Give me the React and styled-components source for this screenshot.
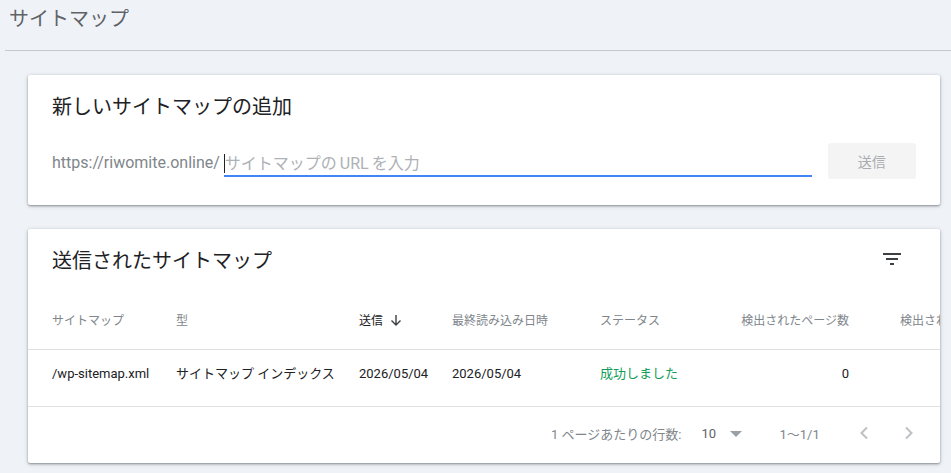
import React from 'react';
import styled, { createGlobalStyle } from 'styled-components';

const GlobalStyle = createGlobalStyle`
  html, body {
    margin: 0;
    padding: 0;
    height: 100%;
    background: #eff3f8;
    overflow: hidden;
  }
  body {
    font-family: Roboto, "Noto Sans CJK JP", sans-serif;
  }
`;

const Page = styled.div`
  width: 951px;
  height: 473px;
  overflow: hidden;
  background: #eff3f8;
`;

const TopBar = styled.header`
  height: 51px;
  margin-left: 5px;
  padding: 6px 0 0 4px;
  box-sizing: border-box;
  border-bottom: 1px solid #c6c9c9;
`;

const PageTitle = styled.h1`
  margin: 0;
  font-size: 20px;
  line-height: 26px;
  font-weight: 400;
  color: #5f6368;
`;

const Content = styled.main`
  display: flex;
  flex-direction: column;
  gap: 24px;
  width: 912px;
  margin: 24px 0 0 28px;
`;

const Card = styled.section`
  background: #fff;
  border-radius: 2px;
  box-shadow: 0 1px 2px rgba(60, 64, 67, 0.45), 0 1px 4px rgba(60, 64, 67, 0.25);
  overflow: hidden;
`;

const AddCard = styled(Card)`
  height: 130px;
  padding: 19px 24px 0;
  box-sizing: border-box;
`;

const CardTitle = styled.h2`
  margin: 0;
  font-size: 20px;
  line-height: 26px;
  font-weight: 400;
  color: #202124;
`;

const AddRow = styled.div`
  display: flex;
  align-items: flex-start;
  margin-top: 24px;
`;

const Prefix = styled.span`
  font-size: 16px;
  line-height: 38px;
  color: #80868b;
  margin-right: 4px;
  white-space: nowrap;
`;

const UrlField = styled.div`
  display: flex;
  align-items: flex-end;
  width: 588px;
  height: 33px;
  box-sizing: border-box;
  border-bottom: 2px solid #4285f4;
`;

const Caret = styled.span`
  width: 1px;
  height: 19px;
  margin-bottom: 2px;
  background: #202124;
`;

const Placeholder = styled.span`
  font-size: 16px;
  line-height: 22px;
  word-spacing: -1px;
  color: #aeb1b5;
  white-space: nowrap;
`;

const SendButton = styled.button`
  width: 88px;
  height: 36px;
  margin-left: 16px;
  margin-top: -1px;
  border: 0;
  border-radius: 3px;
  background: #f4f4f4;
  color: #aaadb0;
  font: inherit;
  font-size: 14px;
`;

const ListCard = styled(Card)`
  height: 234px;
  display: flex;
  flex-direction: column;
`;

const ListHeader = styled.div`
  display: flex;
  align-items: center;
  justify-content: space-between;
  height: 63px;
  padding: 1px 39px 0 24px;
  box-sizing: border-box;
`;

const FilterIcon = styled.svg`
  display: block;
  width: 18px;
  height: 12px;
  margin-top: -4px;
  fill: #3c4043;
`;

const Row = styled.div`
  display: grid;
  grid-template-columns: 124px 183px 93px 148px 100px 149px 51px 100px;
  align-items: center;
  padding-left: 24px;
  height: ${({ $height }) => $height}px;
  box-sizing: border-box;
  border-bottom: 1px solid #e0e0e0;
  white-space: nowrap;
`;

const HeadCell = styled.div`
  display: flex;
  align-items: center;
  justify-content: ${({ $right }) => ($right ? 'flex-end' : 'flex-start')};
  font-size: 12px;
  line-height: 18px;
  color: ${({ $active }) => ($active ? '#202124' : '#80868b')};
`;

const SortIcon = styled.svg`
  width: 12px;
  height: 12px;
  margin-left: 7px;
  margin-top: -2px;
  fill: none;
  stroke: #3c4043;
  stroke-width: 1.4;
`;

const Cell = styled.div`
  font-size: 13px;
  line-height: 18px;
  margin-bottom: 8px;
  color: ${({ $ok }) => ($ok ? '#0f9d58' : '#202124')};
  text-align: ${({ $right }) => ($right ? 'right' : 'left')};
`;

const Pager = styled.div`
  flex: 1;
  display: flex;
  align-items: center;
  font-size: 13px;
  color: #80868b;
  padding: 0 0 3px 523px;
  white-space: nowrap;

  & > * {
    flex: none;
  }
`;

const PagerCount = styled.span`
  margin-left: 20px;
  width: 24px;
  color: #5f6368;
`;

const DropArrow = styled.span`
  width: 0;
  height: 0;
  margin-left: 5px;
  margin-top: 1px;
  border-left: 6px solid transparent;
  border-right: 6px solid transparent;
  border-top: 6px solid #9aa0a6;
`;

const PagerRange = styled.span`
  margin-left: 37px;
  width: 79px;
`;

const PageIcon = styled.svg`
  width: 12px;
  height: 14px;
  margin-right: 33px;
  margin-top: -2px;
  fill: none;
  stroke: #bdc1c6;
  stroke-width: 2;

  &:last-child {
    margin-right: 0;
  }
`;

const App = () => {
  return (
    <Page>
      <GlobalStyle />
      <TopBar>
        <PageTitle>サイトマップ</PageTitle>
      </TopBar>
      <Content>
        <AddCard>
          <CardTitle>新しいサイトマップの追加</CardTitle>
          <AddRow>
            <Prefix>https://riwomite.online/</Prefix>
            <UrlField>
              <Caret />
              <Placeholder>サイトマップの URL を入力</Placeholder>
            </UrlField>
            <SendButton disabled>送信</SendButton>
          </AddRow>
        </AddCard>
        <ListCard>
          <ListHeader>
            <CardTitle>送信されたサイトマップ</CardTitle>
            <FilterIcon viewBox="0 0 18 12">
              <path d="M0 0h18v2H0zM3 5h12v2H3zM7 10h4v2H7z" />
            </FilterIcon>
          </ListHeader>
          <Row $height={58}>
            <HeadCell>サイトマップ</HeadCell>
            <HeadCell>型</HeadCell>
            <HeadCell $active>
              送信
              <SortIcon viewBox="0 0 12 12">
                <path d="M6 1v10M1.5 6.5 6 11l4.5-4.5" />
              </SortIcon>
            </HeadCell>
            <HeadCell>最終読み込み日時</HeadCell>
            <HeadCell>ステータス</HeadCell>
            <HeadCell $right>検出されたページ数</HeadCell>
            <span />
            <HeadCell>検出された動画数</HeadCell>
          </Row>
          <Row $height={57}>
            <Cell>/wp-sitemap.xml</Cell>
            <Cell>サイトマップ インデックス</Cell>
            <Cell>2026/05/04</Cell>
            <Cell>2026/05/04</Cell>
            <Cell $ok>成功しました</Cell>
            <Cell $right>0</Cell>
          </Row>
          <Pager>
            <span>1 ページあたりの行数:</span>
            <PagerCount>10</PagerCount>
            <DropArrow />
            <PagerRange>1〜1/1</PagerRange>
            <PageIcon viewBox="0 0 12 14">
              <path d="M9 1.5 3.5 7 9 12.5" />
            </PageIcon>
            <PageIcon viewBox="0 0 12 14">
              <path d="M3 1.5 8.5 7 3 12.5" />
            </PageIcon>
          </Pager>
        </ListCard>
      </Content>
    </Page>
  );
};

export default App;
